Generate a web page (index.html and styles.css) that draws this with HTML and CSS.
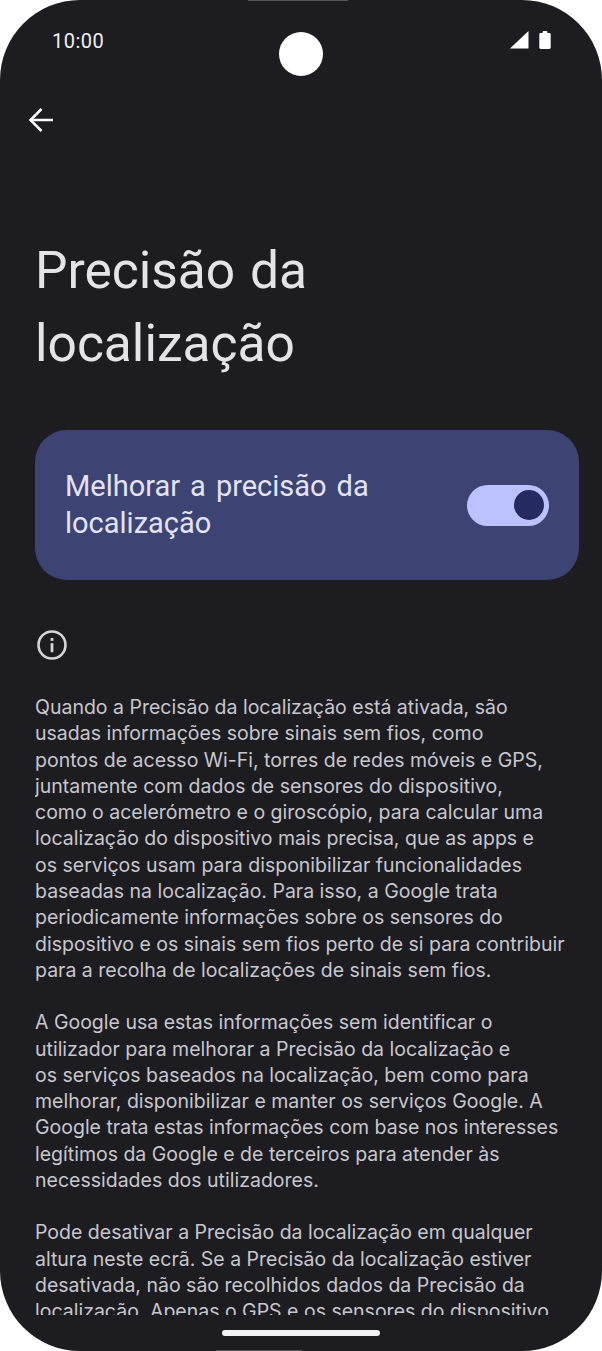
FILE: index.html
```html
<!DOCTYPE html>
<html lang="pt">
<head>
  <meta charset="UTF-8" />
  <meta name="viewport" content="width=device-width, initial-scale=1.0"/>
  <title>Precisão da localização</title>
  <link rel="stylesheet" href="styles.css">
</head>
<body>

  <div class="screen">
    <div class="edgeMark edgeTop"></div>
    <div class="camera"></div>

    <div class="statusBar">
      <span class="clock">10:00</span>
      <div class="statusIcons">
        <svg class="signal" width="19" height="18" viewBox="0 0 19 18"><path d="M0 17.500 18.500 0v17.500z" fill="#fff"/></svg>
        <svg class="battery" width="12" height="18" viewBox="0 0 12 19" preserveAspectRatio="none"><path d="M3.600 2V1.200C3.600.5 4 0 4.700 0h2.600c.7 0 1.100.5 1.100 1.200V2h1.900c.9 0 1.400.6 1.400 1.400v14c0 .9-.5 1.500-1.400 1.500H1.700C.8 18.900.3 18.300.3 17.400v-14C.3 2.600.8 2 1.700 2z" fill="#fff"/></svg>
      </div>
    </div>

    <div class="toolbar">
      <svg width="26" height="26" viewBox="0 0 26 26" fill="none" stroke="#fff" stroke-width="2.500"><path d="M25 13H3"/><path d="M13.500 2 2.500 13l11 11"/></svg>
    </div>

    <h1 class="pageTitle">Precisão da<br>localização</h1>

    <div class="mainSwitch">
      <span class="switchLabel">Melhorar a precisão da<br>localização</span>
      <div class="toggle"><div class="knob"></div></div>
    </div>

    <svg class="infoIcon" width="32" height="32" viewBox="0 0 32 32" fill="none">
      <circle cx="16" cy="16" r="13.500" stroke="#d4d3d9" stroke-width="2.600"/>
      <rect x="14.600" y="14.200" width="2.800" height="9" fill="#d4d3d9"/>
      <rect x="14.600" y="9" width="2.800" height="2.900" fill="#d4d3d9"/>
    </svg>

    <div class="description">
      <p>Quando a Precisão da localização está ativada, são<br>usadas informações sobre sinais sem fios, como<br>pontos de acesso Wi-Fi, torres de redes móveis e GPS,<br>juntamente com dados de sensores do dispositivo,<br>como o acelerómetro e o giroscópio, para calcular uma<br>localização do dispositivo mais precisa, que as apps e<br>os serviços usam para disponibilizar funcionalidades<br>baseadas na localização. Para isso, a Google trata<br>periodicamente informações sobre os sensores do<br>dispositivo e os sinais sem fios perto de si para contribuir<br>para a recolha de localizações de sinais sem fios.</p>
      <p>A Google usa estas informações sem identificar o<br>utilizador para melhorar a Precisão da localização e<br>os serviços baseados na localização, bem como para<br>melhorar, disponibilizar e manter os serviços Google. A<br>Google trata estas informações com base nos interesses<br>legítimos da Google e de terceiros para atender às<br>necessidades dos utilizadores.</p>
      <p>Pode desativar a Precisão da localização em qualquer<br>altura neste ecrã. Se a Precisão da localização estiver<br>desativada, não são recolhidos dados da Precisão da<br>localização. Apenas o GPS e os sensores do dispositivo</p>
    </div>

    <div class="navHandle"></div>
    <div class="edgeMark edgeBottom"></div>
  </div>

</body>
</html>
```

FILE: styles.css
```css
* {
  box-sizing: border-box;
}

body {
  margin: 0;
  padding: 0;
  background: #fff;
  font-family: Roboto, 'Noto Sans', sans-serif;
}

.screen {
  position: relative;
  width: 602px;
  height: 1351px;
  background: #1c1c21;
  border-radius: 80px;
  overflow: hidden;
  display: flex;
  flex-direction: column;
}

.edgeMark {
  position: absolute;
  left: 248px;
  width: 100px;
  height: 1px;
  background: #55555a;
}

.edgeTop {
  top: 0;
}

.edgeBottom {
  bottom: 0;
  left: 216px;
  width: 86px;
}

.camera {
  position: absolute;
  top: 32px;
  left: 279px;
  width: 44px;
  height: 44px;
  border-radius: 50%;
  background: #fff;
}

.statusBar {
  height: 81px;
  padding: 29px 51px 0 52px;
  display: flex;
  justify-content: space-between;
  color: #f1f0f5;
}

.clock {
  font-size: 20px;
  line-height: 24px;
  letter-spacing: 0.5px;
}

.statusIcons {
  display: flex;
  align-items: flex-start;
  gap: 10px;
  padding-top: 2px;
}

.toolbar {
  height: 78px;
  padding: 26px 0 0 28px;
  display: flex;
}

.pageTitle {
  margin: 75px 0 0 35px;
  font-size: 51.5px;
  line-height: 73px;
  font-weight: 400;
  word-spacing: 2px;
  color: #e4e3e8;
}

.mainSwitch {
  margin: 50px 23px 0 35px;
  height: 150px;
  padding: 0 30px 0 30px;
  background: #3d4373;
  border-radius: 32px;
  display: flex;
  align-items: center;
  justify-content: space-between;
}

.switchLabel {
  font-size: 29px;
  line-height: 37px;
  word-spacing: 2.8px;
  color: #e3e3f5;
}

.toggle {
  width: 82px;
  height: 41px;
  padding: 5px;
  border-radius: 21px;
  background: #bcc2ff;
  display: flex;
  justify-content: flex-end;
}

.knob {
  width: 30px;
  height: 30px;
  border-radius: 50%;
  background: #252a61;
}

.infoIcon {
  margin: 49px 0 0 36px;
  flex: none;
}

.description {
  margin: 33px 20px 0 35px;
  height: 621px;
  overflow: hidden;
  font-family: Inter, Roboto, sans-serif;
  font-size: 19.5px;
  line-height: 26.3px;
  color: #c8c7cd;
  white-space: nowrap;
}

.description p {
  margin: 0 0 26px;
}

.navHandle {
  position: absolute;
  left: 222px;
  bottom: 15px;
  width: 158px;
  height: 6px;
  border-radius: 3px;
  background: #f2f1f6;
}
```
